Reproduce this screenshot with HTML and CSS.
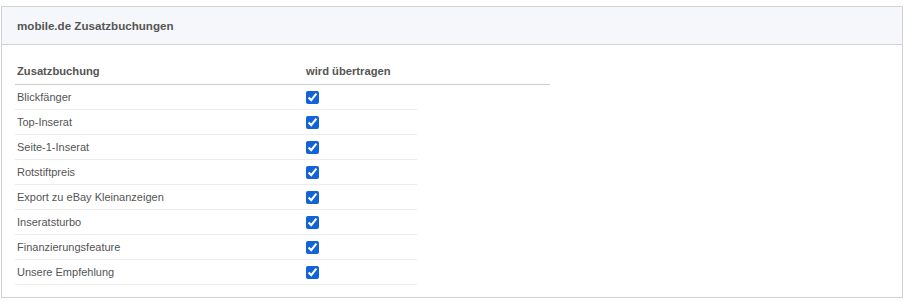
FILE: index.html
```html
<!DOCTYPE html>
<html lang="de">
<head>
    <meta charset="UTF-8">
    <title>mobile.de Zusatzbuchungen</title>
    <link rel="stylesheet" href="styles.css">
</head>
<body>
    <div class="panel">
        <div class="panel-heading">mobile.de Zusatzbuchungen</div>
        <div class="panel-body">
            <div class="list-head">
                <div class="cell">Zusatzbuchung</div>
                <div class="cell">wird übertragen</div>
            </div>
            <div class="list">
                <div class="row"><div class="cell">Blickfänger</div><div class="cell"><input type="checkbox" checked></div></div>
                <div class="row"><div class="cell">Top-Inserat</div><div class="cell"><input type="checkbox" checked></div></div>
                <div class="row"><div class="cell">Seite-1-Inserat</div><div class="cell"><input type="checkbox" checked></div></div>
                <div class="row"><div class="cell">Rotstiftpreis</div><div class="cell"><input type="checkbox" checked></div></div>
                <div class="row"><div class="cell">Export zu eBay Kleinanzeigen</div><div class="cell"><input type="checkbox" checked></div></div>
                <div class="row"><div class="cell">Inseratsturbo</div><div class="cell"><input type="checkbox" checked></div></div>
                <div class="row"><div class="cell">Finanzierungsfeature</div><div class="cell"><input type="checkbox" checked></div></div>
                <div class="row"><div class="cell">Unsere Empfehlung</div><div class="cell"><input type="checkbox" checked></div></div>
            </div>
        </div>
    </div>
</body>
</html>
```

FILE: styles.css
```css
* {
    box-sizing: border-box;
}

body {
    margin: 6px 5px 0 1px;
    font-family: "Liberation Sans", Arial, sans-serif;
    color: #555555;
    background: #ffffff;
}

.panel {
    border: 1px solid #d2d2d2;
}

.panel-heading {
    height: 38px;
    line-height: 37px;
    padding: 0 15px;
    background-color: #f6f7fb;
    border-bottom: 1px solid #d2d2d2;
    font-size: 11.6px;
    font-weight: bold;
    color: #555555;
}

.panel-body {
    padding: 12px 13px 12px 13px;
}

.list-head {
    display: grid;
    grid-template-columns: 289px 1fr;
    width: 535px;
    height: 28px;
    align-items: center;
    border-bottom: 1px solid #cfcfcf;
    font-size: 11.2px;
    font-weight: bold;
}

.list {
    width: 402px;
}

.row {
    display: grid;
    grid-template-columns: 289px 1fr;
    height: 25px;
    align-items: center;
    border-bottom: 1px solid #ececec;
    font-size: 11px;
}

.cell {
    padding-left: 2px;
    display: flex;
    align-items: center;
}

.row input {
    margin: 0;
    width: 13px;
    height: 13px;
    accent-color: #1262d8;
}
```
